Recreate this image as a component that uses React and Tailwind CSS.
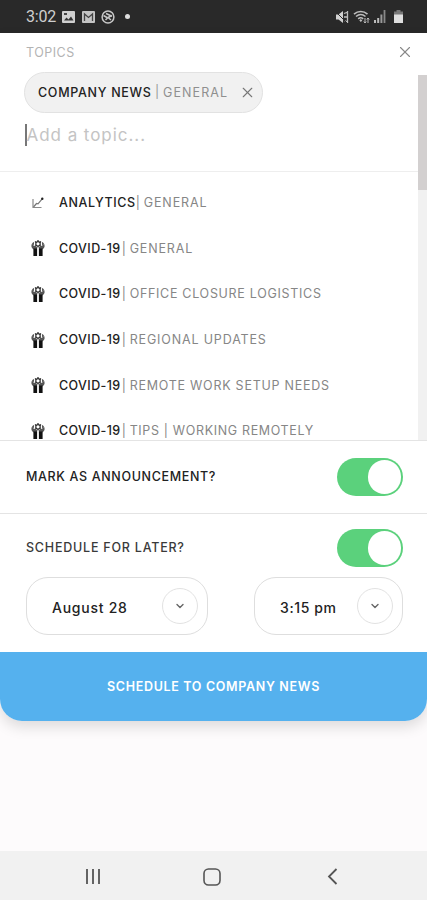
import { useState } from 'react';
import { ChevronDown, X } from 'lucide-react';

const TOPICS = [
  { id: 1, icon: 'chart', name: 'ANALYTICS', sub: 'GENERAL', nameTrack: 'tracking-[0.6px]', subTrack: 'tracking-[0.9px]' },
  { id: 2, icon: 'hands', name: 'COVID-19', sub: 'GENERAL', nameTrack: 'tracking-[0.4px] mr-px', subTrack: 'tracking-[0.85px]' },
  { id: 3, icon: 'hands', name: 'COVID-19', sub: 'OFFICE CLOSURE LOGISTICS', nameTrack: 'tracking-[0.4px] mr-px', subTrack: 'tracking-[0.7px]' },
  { id: 4, icon: 'hands', name: 'COVID-19', sub: 'REGIONAL UPDATES', nameTrack: 'tracking-[0.4px] mr-px', subTrack: 'tracking-[0.85px]' },
  { id: 5, icon: 'hands', name: 'COVID-19', sub: 'REMOTE WORK SETUP NEEDS', nameTrack: 'tracking-[0.4px] mr-px', subTrack: 'tracking-[0.75px]' },
  { id: 6, icon: 'hands', name: 'COVID-19', sub: 'TIPS | WORKING REMOTELY', nameTrack: 'tracking-[0.4px] mr-px', subTrack: 'tracking-[0.65px]' },
];

function ChartIcon() {
  return (
    <svg width="14" height="14" viewBox="0 0 14 14" fill="none">
      <path d="M2 3v8.500H10.500" stroke="#8a8a8a" strokeWidth="1.200" />
      <path d="M2.500 11l3-3.500 1.500.3L11 3.200" stroke="#777" strokeWidth="1.200" />
      <circle cx="11.300" cy="2.800" r="1.200" fill="#222" />
    </svg>
  );
}

// Two raised hands under a small virus
function HandsIcon() {
  return (
    <svg width="14" height="16" viewBox="0 0 14 16" fill="none">
      <circle cx="7" cy="3.800" r="2.200" stroke="#333" strokeWidth="1.200" />
      <path d="M7 0v1.600M4 1.500l1.200 1M10 1.500l-1.200 1M7 6v1.600M4.300 5.500l.8-.6M9.700 5.500l-.8-.6" stroke="#222" strokeWidth="1.200" />
      <path d="M3 2C1.500 2.400.4 4 .4 6c0 1.400.8 2.400 1.800 3.200h3.900V7.200L4.200 5.600 3 6z" fill="#555" />
      <path d="M11 2c1.500.4 2.600 2 2.600 4 0 1.400-.8 2.400-1.800 3.200H7.900V7.200l1.900-1.600L11 6z" fill="#555" />
      <path d="M2.400 8.500h3.700V16H2.400zM7.900 8.500h3.700V16H7.900z" fill="#111" />
      <path d="M1.800 4.500l1.200 1.200M12.200 4.500L11 5.700" stroke="#ddd" strokeWidth="0.700" />
    </svg>
  );
}

function StatusBar() {
  return (
    <div className="h-[33px] bg-[#292929] flex items-center justify-between pl-[26px] pr-[24px] shrink-0">
      <div className="flex items-center text-[#cfcfcf]">
        <span className="font-[Roboto] text-[16px] leading-none w-[36px] pt-px tracking-[-0.2px]">3:02</span>
        <svg width="13" height="12" viewBox="0 0 13 12">
          <rect width="13" height="12" rx="1" fill="#d0d0d0" />
          <path d="M2 9.500l2.500-3 2 2L9 5.500l2.500 4z" fill="#333" />
          <path d="M2 2h3v2H2z" fill="#444" />
        </svg>
        <svg className="ml-[7px]" width="13" height="12" viewBox="0 0 13 12">
          <rect width="13" height="12" rx="1" fill="#c4c4c4" />
          <path d="M2.500 10V3l4 3.500 4-3.500v7" stroke="#444" strokeWidth="1.300" fill="none" />
        </svg>
        <svg className="ml-[6px]" width="14" height="14" viewBox="0 0 14 14" fill="none">
          <circle cx="7" cy="7" r="5.900" stroke="#c8c8c8" strokeWidth="1.500" />
          <path d="M2.500 5.500L6 7.500M5 3.500l6 2.800M4.500 10L7 7.500l3 2.500M11 5.500L7 7.500" stroke="#c8c8c8" strokeWidth="1.500" />
        </svg>
        <span className="ml-[10px] w-[5px] h-[5px] rounded-full bg-[#dedede]" />
      </div>
      <div className="flex items-center">
        {/* Muted speaker */}
        <svg width="14" height="14" viewBox="0 0 14 14" fill="none">
          <path d="M1 4.500h2.500L8 1v12L3.500 9.500H1z" fill="#d0d0d0" />
          <path d="M9 3.500l4-1.500M9 7h4M9 10.500l4 1.500M12.500 1v12" stroke="#bdbdbd" strokeWidth="1.300" />
          <path d="M1 2l11 11" stroke="#292929" strokeWidth="1" />
        </svg>
        <svg className="ml-[4px]" width="17" height="14" viewBox="0 0 17 14" fill="none">
          <path d="M1 4.200c4-3.600 9.500-3.600 13.500 0M3 6.500c3-2.500 6.500-2.500 9.500 0M5.200 8.800c1.700-1.400 3.300-1.400 5 0" stroke="#bdbdbd" strokeWidth="1.600" />
          <path d="M7.800 9l1.500 1.500-1.500 1.500-1.500-1.500z" fill="#bdbdbd" />
          <path d="M12 8v5M15 8v5M10.800 11.500L12 13l1.200-1.500M13.800 9.500L15 8l1.200 1.500" stroke="#bdbdbd" strokeWidth="1" />
        </svg>
        <svg className="ml-[4px]" width="12" height="13" viewBox="0 0 12 13">
          <path d="M0 10h2v3H0zM3.200 8h2v5h-2z" fill="#bcbcbc" />
          <path d="M6.400 4.500h2V13h-2z" fill="#999" />
          <path d="M9.600 0h1.800v13H9.600z" fill="#888" />
        </svg>
        <svg className="ml-[8px]" width="9" height="13" viewBox="0 0 9 13">
          <path d="M2.500 0h4v1.500H9V5H0V1.500h2.500z" fill="#777" />
          <path d="M0 4.500h9V13H0z" fill="#dedede" />
        </svg>
      </div>
    </div>
  );
}

function Toggle({ on, onChange }) {
  return (
    <button
      onClick={() => onChange(!on)}
      className={`w-[66px] h-[38px] rounded-full flex items-center p-[2px] ${on ? 'bg-[#5bd17c] justify-end' : 'bg-gray-300 justify-start'}`}
    >
      <span className="w-[33px] h-[34px] rounded-full bg-white" />
    </button>
  );
}

function Picker({ children, className }) {
  return (
    <button className={`h-[58px] rounded-[22px] border border-[#dedede] flex items-center justify-between pl-[25px] pr-[9px] ${className}`}>
      {children}
      <span className="w-[36px] h-[36px] rounded-full border border-[#e2e2e2] flex items-center justify-center">
        <ChevronDown size={12} strokeWidth={2.8} className="text-[#666]" />
      </span>
    </button>
  );
}

export default function App() {
  const [announce, setAnnounce] = useState(true);
  const [later, setLater] = useState(true);

  return (
    <div className="w-[427px] h-[900px] bg-[#fdfbfc] flex flex-col overflow-hidden font-[Inter,sans-serif] text-[#222]">
      <StatusBar />

      <div className="bg-white rounded-b-[22px] shadow-[0_6px_14px_rgba(0,0,0,0.13)] flex flex-col">
        {/* Header */}
        <div className="h-[39px] flex items-center justify-between pl-[26px] pr-[13px] pb-px shrink-0">
          <span className="pt-[2px] text-[12.5px] tracking-[0.5px] text-[#b3b3b3] whitespace-nowrap">TOPICS</span>
          <X size={18} strokeWidth={1.5} className="text-[#888]" />
        </div>

        {/* Topic picker */}
        <div className="h-[368px] flex shrink-0 overflow-hidden">
          <div className="flex-1 min-w-0">
            <div className="h-[100px] border-b border-[#eeeeee] pl-[24px]">
              <div className="w-[239px] h-[41px] rounded-full bg-[#f1f1f1] border border-[#e2e2e2] flex items-center pl-[13px] pr-[6px] text-[12.5px] whitespace-nowrap">
                <span className="w-[117px] pt-px font-medium tracking-[0.7px]">COMPANY NEWS</span>
                <span className="w-[8px] text-[#999]">|</span>
                <span className="flex-1 pt-px text-[#8f8f8f] tracking-[1.1px]">GENERAL</span>
                <X size={17} strokeWidth={1.6} className="text-[#777]" />
              </div>
              <div className="mt-[11px] ml-px flex items-center">
                <span className="w-[1.500px] h-[22px] bg-[#777]" />
                <span className="text-[17px] leading-[22px] tracking-[0.95px] text-[#c4c4c4]">Add a topic...</span>
              </div>
            </div>
            <ul className="pt-[8px]">
              {TOPICS.map((t) => (
                <li key={t.id} className="h-[45.600px] flex items-center pl-[31px] text-[12.5px] whitespace-nowrap">
                  <span className="w-[28px]">{t.icon === 'chart' ? <ChartIcon /> : <HandsIcon />}</span>
                  <span className="flex items-center pt-[1.500px]">
                    <span className={`font-medium ${t.nameTrack}`}>{t.name}</span>
                    <span className="w-[8px] text-[#888]">|</span>
                    <span className={`text-[#868686] ${t.subTrack}`}>{t.sub}</span>
                  </span>
                </li>
              ))}
            </ul>
          </div>
          <div className="w-[9px] bg-[#f1f1f1] mt-[3px]">
            <div className="h-[115px] bg-[#d3d0d0]" />
          </div>
        </div>

        <div className="h-[73px] border-t border-[#e4e4e4] flex items-center justify-between pl-[26px] pr-[24px]">
          <span className="text-[12.5px] font-medium tracking-[0.65px]">MARK AS ANNOUNCEMENT?</span>
          <Toggle on={announce} onChange={setAnnounce} />
        </div>

        <div className="h-[139px] border-t border-[#e4e4e4] pt-[15px] pl-[26px] pr-[24px]">
          <div className="flex items-center justify-between">
            <span className="text-[12.5px] font-medium tracking-[0.78px] text-[#3a3a3a]">SCHEDULE FOR LATER?</span>
            <Toggle on={later} onChange={setLater} />
          </div>
          <div className="mt-[10px] flex justify-between text-[14px]">
            <Picker className="w-[182px]">
              <span className="pt-[3px] tracking-[0.75px] font-medium">August 28</span>
            </Picker>
            <Picker className="w-[149px]">
              <span className="pt-[3px] tracking-[0.6px] font-medium">3:15 pm</span>
            </Picker>
          </div>
        </div>

        <button className="h-[69px] pt-px rounded-b-[22px] bg-[#55b1ee] text-white text-[12.5px] font-semibold tracking-[0.67px]">
          SCHEDULE TO COMPANY NEWS
        </button>
      </div>

      {/* Android navigation */}
      <div className="mt-auto h-[49px] pt-[2px] bg-[#f1f1f1] flex items-center text-[#555] shrink-0">
        <svg className="ml-[85px]" width="16" height="17" viewBox="0 0 16 17">
          <path d="M2 1v15M8 1v15M14 1v15" stroke="currentColor" strokeWidth="1.800" />
        </svg>
        <svg className="ml-[102px]" width="18" height="18" viewBox="0 0 18 18" fill="none">
          <rect x="1" y="1" width="16" height="16" rx="4.500" stroke="currentColor" strokeWidth="1.600" />
        </svg>
        <svg className="ml-[106px]" width="11" height="17" viewBox="0 0 11 17" fill="none">
          <path d="M9.500 1L2 8.500 9.500 16" stroke="currentColor" strokeWidth="1.800" />
        </svg>
      </div>
    </div>
  );
}
